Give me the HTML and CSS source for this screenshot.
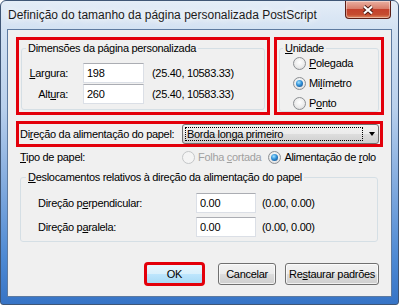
FILE: index.html
```html
<!DOCTYPE html>
<html lang="pt">
<head>
	<meta charset="UTF-8">
	<title>Definição do tamanho da página personalizada PostScript</title>
	<link rel="stylesheet" href="styles.css">
</head>
<body>
	<div class="window">
		<div class="titlebar">
			<span class="title">Definição do tamanho da página personalizada PostScript</span>
			<button class="close" type="button" aria-label="Fechar">
				<svg width="12" height="10" viewBox="0 0 12 10">
					<path d="M2 1.5 L10 8.5 M10 1.5 L2 8.5" stroke="#4a1b14" stroke-width="4"/>
					<path d="M2 1.5 L10 8.5 M10 1.5 L2 8.5" stroke="#fff" stroke-width="2.2"/>
				</svg>
			</button>
		</div>
		<div class="client">
			<div class="top-row">
				<div class="mark size-mark">
					<fieldset class="group size-group">
						<legend>Dimensões da página personalizada</legend>
						<div class="field-row first">
							<label><u>L</u>argura:</label>
							<input type="text" value="198">
							<span class="range">(25.40, 10583.33)</span>
						</div>
						<div class="field-row">
							<label>Alt<u>u</u>ra:</label>
							<input type="text" value="260">
							<span class="range">(25.40, 10583.33)</span>
						</div>
					</fieldset>
				</div>
				<div class="mark unit-mark">
					<fieldset class="group unit-group">
						<legend><u>U</u>nidade</legend>
						<label class="radio"><span class="dot"></span><span><u>P</u>olegada</span></label>
						<label class="radio"><span class="dot checked"></span><span>Mi<u>l</u>ímetro</span></label>
						<label class="radio"><span class="dot"></span><span>P<u>o</u>nto</span></label>
					</fieldset>
				</div>
			</div>
			<div class="mark feed-mark">
				<label class="feed-label">Di<u>r</u>eção da alimentação do papel:</label>
				<div class="combo">
					<span class="combo-text">Borda longa primeiro</span>
					<span class="arrow"></span>
				</div>
			</div>
			<div class="type-row">
				<label class="type-label"><u>T</u>ipo de papel:</label>
				<label class="radio disabled"><span class="dot"></span><span>Folha <u>c</u>ortada</span></label>
				<label class="radio roll"><span class="dot checked"></span><span>Alimentação de <u>r</u>olo</span></label>
			</div>
			<fieldset class="group offset-group">
				<legend><u>D</u>eslocamentos relativos à direção da alimentação do papel</legend>
				<div class="offset-row first">
					<label>Direção p<u>e</u>rpendicular:</label>
					<input type="text" value="0.00">
					<span class="range">(0.00, 0.00)</span>
				</div>
				<div class="offset-row">
					<label>Direção p<u>a</u>ralela:</label>
					<input type="text" value="0.00">
					<span class="range">(0.00, 0.00)</span>
				</div>
			</fieldset>
			<div class="buttons">
				<button type="button" class="btn btn-ok">OK</button>
				<button type="button" class="btn btn-cancel">Cancelar</button>
				<button type="button" class="btn btn-reset">Re<u>s</u>taurar padrões</button>
			</div>
		</div>
	</div>
</body>
</html>
```

FILE: styles.css
```css
*{box-sizing: border-box;}
body{margin: 0;background: #fff;color: #000;font: 11px/13px "Liberation Sans", Arial, sans-serif;letter-spacing: -0.3px;}
input,button{font: inherit;letter-spacing: inherit;color: inherit;}

/* window frame */
.window{width: 399px;height: 305px;display: flex;flex-direction: column;border: 1px solid #3f5676;border-radius: 6px 6px 3px 3px;overflow: hidden;background: linear-gradient(180deg, #e4edf7 0%, #d2e1f2 10%, #b9d0ec 35%, #84acdf 60%, #4d89d3 85%, #3774c6 100%);}
.titlebar{height: 28px;flex: none;display: flex;align-items: center;padding-left: 7px;}
.title{flex: 1;font-size: 12px;letter-spacing: 0;color: #1b1b1b;white-space: nowrap;text-shadow: 0 0 6px #fff, 0 0 10px #fff;}
.close{align-self: flex-start;width: 46px;height: 18px;margin-right: 7px;padding: 0;display: flex;align-items: center;justify-content: center;border: 1px solid #5b1e16;border-top: 0;border-radius: 0 0 4px 4px;background: linear-gradient(#eab0a2 0%, #d97e6b 45%, #c4412c 50%, #c54c30 80%, #df8a62 100%);box-shadow: inset 0 0 0 1px rgba(255,255,255,.4);}

.client{flex: 1;margin: 0 6px 7px;border: 1px solid #5d7aa0;background: #f0f0f0;padding: 7px 0 0 8px;display: flex;flex-direction: column;}

/* red annotation boxes */
.mark{border: 3px solid #e3000b;}
.top-row{display: flex;gap: 4px;height: 78px;flex: none;}
.size-mark{width: 254px;display: flex;}
.unit-mark{width: 110px;display: flex;}

.group{margin: 0;padding: 0;min-width: 0;border: 1px solid #d5dfe5;border-radius: 3px;}
.group legend{padding: 0 2px;line-height: 13px;}

.size-group{flex: 1;margin: 2px;padding-left: 4px;}
.field-row{display: flex;align-items: center;height: 20px;margin-top: 1px;}
.field-row.first{margin-top: 8px;}
.field-row label{width: 42px;margin-right: 15px;text-align: right;}
.field-row input{width: 61px;}
.range{margin-left: 8px;white-space: nowrap;}

input{height: 20px;padding: 0 3px;background: #fff;border: 1px solid #dbdfe6;border-top-color: #abadb3;outline: none;}

.unit-group{flex: 1;margin: 2px 2px 0;padding-left: 3px;display: flex;flex-direction: column;}
.unit-group .radio{height: 14px;margin-left: 10px;margin-top: 6px;}
.unit-group .radio:first-of-type{margin-top: 1px;}

.radio{display: flex;align-items: center;white-space: nowrap;}
.dot{position: relative;flex: none;width: 13px;height: 13px;margin-right: 3px;border: 1px solid #8c8f93;border-radius: 50%;background: radial-gradient(circle at 50% 40%, #fff 0%, #ececec 55%, #d2d2d2 100%);}
.dot.checked::after{content: "";position: absolute;top: 2px;left: 2px;width: 7px;height: 7px;border-radius: 50%;background: radial-gradient(circle at 40% 35%, #a6e4ff 0%, #2f90d8 45%, #173f75 100%);}
.radio.disabled{color: #a0a0a0;}
.radio.disabled .dot{border-color: #c4c6c8;background: #f4f4f4;}

/* paper feed row */
.feed-mark{margin-top: 6px;width: 367px;height: 26px;flex: none;display: flex;align-items: center;padding-left: 1px;}
.feed-label{flex: 1;white-space: nowrap;}
.combo{width: 197px;height: 20px;margin-right: 1px;display: flex;align-items: center;padding: 0 2px;border: 1px solid #707070;border-radius: 3px;background: linear-gradient(#f2f2f2 0%, #ebebeb 50%, #dddddd 50%, #cfcfcf 100%);}
.combo-text{width: 178px;height: 14px;line-height: 12px;padding-left: 1px;border: 1px dotted #000;}
.arrow{margin-left: 6px;border-top: 4px solid #000;border-left: 3.5px solid transparent;border-right: 3.5px solid transparent;}

.type-row{display: flex;align-items: center;height: 16px;margin-top: 2px;padding-left: 4px;flex: none;}
.type-label{width: 162px;}
.type-row .dot{margin-right: 3px;}
.type-row .roll{margin-left: 7px;}

/* offsets group */
.offset-group{margin: 6px 0 0 4px;width: 358px;padding: 0 0 4px 5px;}
.offset-row{display: flex;align-items: center;height: 20px;margin-top: 4px;padding-left: 12px;}
.offset-row.first{margin-top: 9px;}
.offset-row label{width: 158px;}
.offset-row input{width: 60px;}
.offset-row .range{margin-left: 6px;}

/* bottom buttons */
.buttons{display: flex;justify-content: flex-end;margin-top: 21px;padding-right: 12px;}
.btn{height: 22px;padding: 0;border: 1px solid #707070;border-radius: 3px;background: linear-gradient(#f2f2f2 0%, #ebebeb 50%, #dddddd 50%, #cfcfcf 100%);box-shadow: inset 0 0 0 1px rgba(255,255,255,.7);}
.btn-ok{width: 59px;margin-right: 14px;border-color: #3c7fb1;background: linear-gradient(#eaf6fd 0%, #d9f0fc 50%, #bee6fd 50%, #a7d9f5 100%);outline: 3px solid #e3000b;outline-offset: -2px;}
.btn-cancel{width: 58px;margin-right: 9px;}
.btn-reset{width: 94px;}
```
